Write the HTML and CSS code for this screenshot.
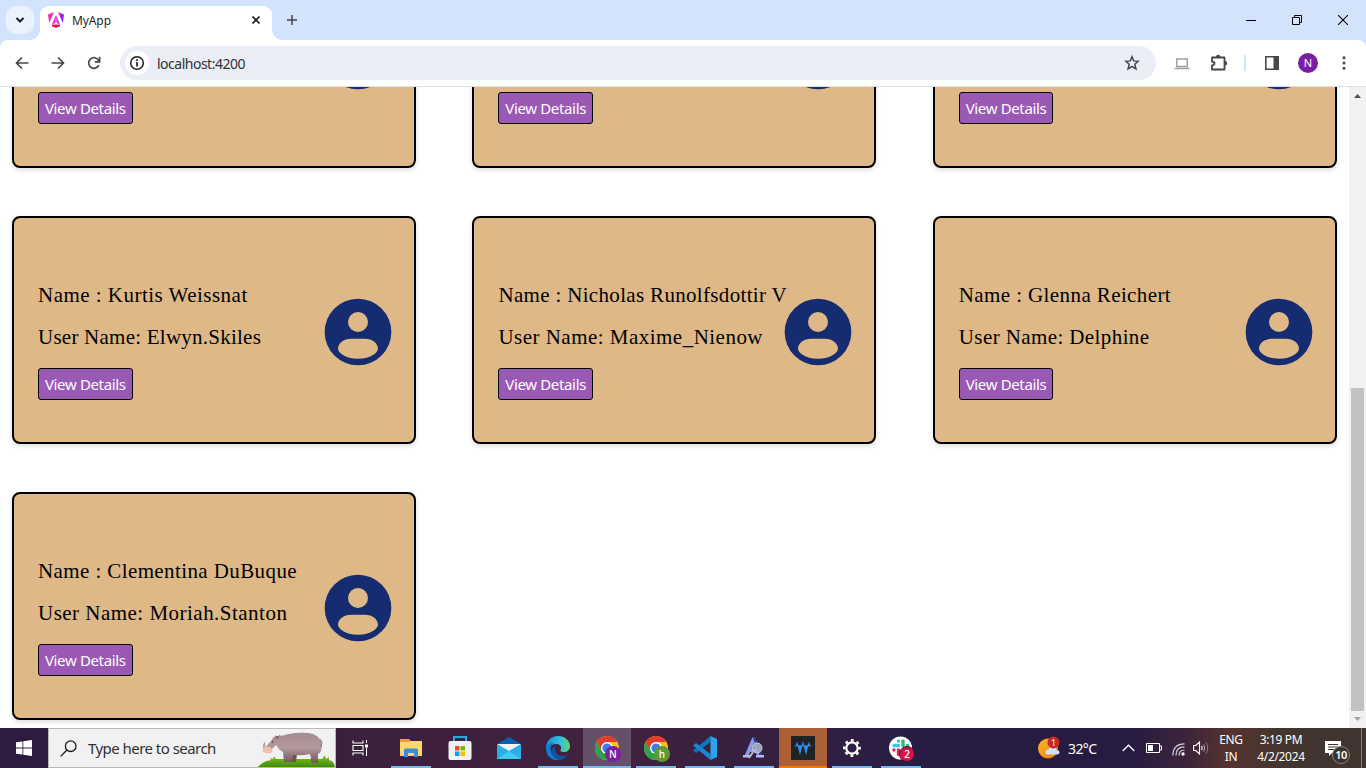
FILE: index.html
```html
<!DOCTYPE html>
<html lang="en">
<head>
<meta charset="utf-8">
<title>MyApp</title>
<link rel="stylesheet" href="styles.css">
</head>
<body>
<svg class="defs" width="0" height="0">
  <symbol id="avatar" viewBox="0 0 24 24"><path fill="#152c70" fill-rule="evenodd" d="M12 2a10 10 0 1 0 0 20a10 10 0 1 0 0-20zM12 6a3 3 0 1 1 0 6a3 3 0 1 1 0-6zM6 17c0-1.600 1.600-3 4-3h4c2.400 0 4 1.400 4 3c0 1-2 3-6 3s-6-2-6-3z"/></symbol>
  <symbol id="chrome" viewBox="0 0 24 24"><circle cx="12" cy="12" r="12" fill="#fbc116"/><path fill="#e33b2e" d="M1.600 6A12 12 0 0 1 22.400 6H12L6.800 15z"/><path fill="#2da24c" d="M1.600 6A12 12 0 0 0 12 24l5.200-9L6.800 15z"/><circle cx="12" cy="12" r="6" fill="#fff"/><circle cx="12" cy="12" r="4.600" fill="#3b7ded"/></symbol>
</svg>

<header class="tabstrip">
  <div class="tab-search"><svg width="10" height="8" viewBox="0 0 10 8"><path d="M1.500 2L5 5.500 8.500 2" fill="none" stroke="#1f1f1f" stroke-width="2"/></svg></div>
  <div class="tab">
    <svg class="favicon" width="16" height="16" viewBox="0 0 16 16"><defs><linearGradient id="ng" x1="0" x2="1" y1="0" y2="0"><stop offset="0" stop-color="#fb28b0"/><stop offset=".55" stop-color="#e72ad8"/><stop offset="1" stop-color="#7a1df5"/></linearGradient></defs><path fill="url(#ng)" d="M0 2.500L6 0 1.200 11zM16 2.500L10 0l4.800 11zM8 3.200l3.800 8.500H9.500L8.800 10H7.200l-.7 1.700H4.200zM8 6.200L7.200 8.600h1.600z"/><path fill="#f50a52" d="M4 12.500h8v1.700L8 16l-4-1.800z"/></svg>
    <span class="tab-title">MyApp</span>
    <svg width="8" height="8" viewBox="0 0 8 8"><path d="M.5.5l7 7M7.500.5l-7 7" stroke="#1f1f1f" stroke-width="1.600"/></svg>
  </div>
  <svg class="new-tab" width="10" height="10" viewBox="0 0 10 10"><path d="M5 0v10M0 5h10" stroke="#474747" stroke-width="1.500"/></svg>
  <div class="window-controls">
    <svg width="10" height="10" viewBox="0 0 10 10"><path d="M0 5.500h10" stroke="#000"/></svg>
    <svg width="10" height="10" viewBox="0 0 10 10"><path d="M.5 2.500h7v7h-7zM2.500 2.500v-2h7v7h-2" fill="none" stroke="#000"/></svg>
    <svg width="10" height="10" viewBox="0 0 10 10"><path d="M0 0l10 10M10 0L0 10" stroke="#000" stroke-width="1.100"/></svg>
  </div>
</header>

<nav class="toolbar">
  <svg width="14" height="14" viewBox="0 0 14 14" class="nav-icon"><path d="M13.500 7H2M7 1.500L1.500 7 7 12.500"/></svg>
  <svg width="14" height="14" viewBox="0 0 14 14" class="nav-icon"><path d="M.5 7H12M7 1.500L12.500 7 7 12.500"/></svg>
  <svg width="14" height="14" viewBox="0 0 14 14" class="nav-icon"><path d="M11.800 9.200A5.300 5.300 0 1 1 11.500 4.200L12.500 5.500M12.600.8v5H7.800"/></svg>
  <div class="address">
    <div class="site-info"><svg width="16" height="16" viewBox="0 0 16 16"><circle cx="8" cy="8" r="6.300" fill="none" stroke="#1f1f1f" stroke-width="1.500"/><path d="M8 7v4.500M8 4.300v1.600" stroke="#1f1f1f" stroke-width="1.700"/></svg></div>
    <span class="url">localhost:4200</span>
    <svg width="16" height="16" viewBox="0 0 16 16"><path d="M8 1.700l1.700 4.200 4.600.4-3.500 3 1.100 4.500L8 11.400l-3.900 2.400 1.100-4.500-3.500-3 4.600-.4z" fill="none" stroke="#474747" stroke-width="1.500"/></svg>
  </div>
  <div class="actions">
    <svg class="laptop" width="16" height="12" viewBox="0 0 16 12"><path d="M2.700.9h10.600v7.500H2.700zM.5 10.500h15" fill="none" stroke="#a0a0a0" stroke-width="1.500"/></svg>
    <svg width="18" height="18" viewBox="0 0 18 18"><path d="M2 3.500h12.500v12H2v-4q2.500-.5 2.500-2T2 7.500z" fill="none" stroke="#474747" stroke-width="1.800" stroke-linejoin="round"/><path d="M6 3a2.200 2.200 0 0 1 4.400 0zM15 7a2.200 2.200 0 0 1 0 4.400z" fill="#474747"/></svg>
    <i class="divider"></i>
    <svg class="side-panel" width="14" height="14" viewBox="0 0 14 14"><path d="M.8.8h12.400v12.400H.8z" fill="none" stroke="#474747" stroke-width="1.600"/><path d="M8.500 0H14v14H8.500z" fill="#474747"/></svg>
    <span class="profile">N</span>
    <svg class="menu" width="4" height="14" viewBox="0 0 4 14" fill="#474747"><circle cx="2" cy="1.700" r="1.500"/><circle cx="2" cy="7" r="1.500"/><circle cx="2" cy="12.300" r="1.500"/></svg>
  </div>
</nav>

<div class="viewport">
  <main class="cards">
    <article class="card"><div class="info brief"><button>View Details</button></div><svg class="avatar"><use href="#avatar"/></svg></article>
    <article class="card"><div class="info brief"><button>View Details</button></div><svg class="avatar"><use href="#avatar"/></svg></article>
    <article class="card"><div class="info brief"><button>View Details</button></div><svg class="avatar"><use href="#avatar"/></svg></article>
    <article class="card"><div class="info"><p class="wide">Name : Kurtis Weissnat</p><p class="snug">User Name: Elwyn.Skiles</p><button>View Details</button></div><svg class="avatar"><use href="#avatar"/></svg></article>
    <article class="card"><div class="info"><p>Name : Nicholas Runolfsdottir V</p><p class="wide">User Name: Maxime_Nienow</p><button>View Details</button></div><svg class="avatar"><use href="#avatar"/></svg></article>
    <article class="card"><div class="info"><p class="mid">Name : Glenna Reichert</p><p class="mid">User Name: Delphine</p><button>View Details</button></div><svg class="avatar"><use href="#avatar"/></svg></article>
    <article class="card"><div class="info"><p class="mid">Name : Clementina DuBuque</p><p class="wide">User Name: Moriah.Stanton</p><button>View Details</button></div><svg class="avatar"><use href="#avatar"/></svg></article>
  </main>
  <div class="scrollbar">
    <svg width="17" height="17" viewBox="0 0 17 17"><path d="M5 11h7L8.500 7z" fill="#505050"/></svg>
    <i class="thumb"></i>
    <svg width="17" height="17" viewBox="0 0 17 17"><path d="M5 6h7l-3.500 4z" fill="#a3a3a3"/></svg>
  </div>
</div>

<footer class="taskbar">
  <div class="start"><svg width="16" height="16" viewBox="0 0 16 16" fill="#fff"><path d="M0 2.300L6.500 1.400V7.600H0zM7.300 1.300L16 0v7.600H7.300zM0 8.400h6.500v6.200L0 13.700zM7.300 8.400H16V16l-8.700-1.300z"/></svg></div>
  <div class="search">
    <svg width="17" height="17" viewBox="0 0 17 17"><circle cx="10.700" cy="6.200" r="5.300" fill="none" stroke="#1a1a1a" stroke-width="1.300"/><path d="M7 10L.6 16.400" stroke="#1a1a1a" stroke-width="1.300"/></svg>
    <span class="hint">Type here to search</span>
    <svg class="hippo" width="77" height="35" viewBox="0 0 77 35">
      <defs><linearGradient id="skin" x1="0" x2="0" y1="0" y2="1"><stop offset="0" stop-color="#a58b92"/><stop offset=".5" stop-color="#b39a9c"/><stop offset="1" stop-color="#6d5759"/></linearGradient><linearGradient id="grass" x1="0" x2="0" y1="0" y2="1"><stop offset="0" stop-color="#8fc31d"/><stop offset="1" stop-color="#3d8b0c"/></linearGradient></defs>
      <path d="M0 35Q5 29 13 28l-1-2 3 1 1-3 2 3 22 0 24 0 3-4 1 4 3-2 0 3q5 1 6 7z" fill="url(#grass)"/>
      <path d="M33 21l6 1-1 8h-5zM53 20l6 1-1 9h-5z" fill="#6b5457"/>
      <path d="M7 15Q11 12 14 7.500q1-3.500 6-3.500 2-2 3 0 6-2 14-3 12-1 18 1 8 3 9 11 0 7-4 9l0 9h-6l-2-9q-8 2-17 1l-1 7h-8l-1-10q-5-3-7-7-3 4-8 6-4 1-5-4 0-4 2-5z" fill="url(#skin)"/>
      <path d="M6 15q5-2 8 2 2 4-3 4.500-6 0-6.500-3z" fill="#f2c3ab"/><circle cx="14.500" cy="10" r=".8" fill="#493739"/><path d="M17 3.500l4 1-2 3z" fill="#80656b"/><path d="M62 7q3.500 3 1 8" fill="none" stroke="#8e747a"/>
    </svg>
  </div>
  <div class="task-view"><svg width="17" height="16" viewBox="0 0 17 16"><path d="M1 .5v2.500h10V.5M1 5.500h10v5H1zM1 15.500V13h10v2.500M14.500 0v3M14.500 8v8" fill="none" stroke="#fff" stroke-width="1.100"/><path d="M13 4.500h3v3h-3z" fill="#fff"/></svg></div>
  <div class="apps">
    <div class="app open"><svg width="22" height="20" viewBox="0 0 22 20"><path d="M0 1h9l2 2h11v15H0z" fill="#e8a51c"/><path d="M0 4h9l2-1h11v15H0z" fill="#ffd86b"/><path d="M4 19v-7q0-1.500 1.500-1.500h11q1.500 0 1.500 1.500v7h-4v-4H8v4z" fill="#3b8fd6"/></svg></div>
    <div class="app"><svg width="24" height="24" viewBox="0 0 24 24"><path d="M6 6V1h12v5" fill="none" stroke="#26a8e0" stroke-width="2"/><rect x=".5" y="5" width="23" height="19" rx="2" fill="#f2f2f2"/><path d="M7 10h4.500v4.500H7z" fill="#f04e23"/><path d="M12.500 10H17v4.500h-4.500z" fill="#7cb905"/><path d="M7 15.500h4.500V20H7z" fill="#00a3ee"/><path d="M12.500 15.500H17V20h-4.500z" fill="#ffb800"/></svg></div>
    <div class="app"><svg width="24" height="22" viewBox="0 0 24 22"><path d="M0 7L12 0l12 7v3H0z" fill="#0b5fae"/><path d="M1 7h22v5L12 17 1 12z" fill="#f3f3f3"/><path d="M0 7l12 7 12-7v15H0z" fill="#28afe8"/><path d="M0 22l12-8 12 8z" fill="#42c9f5"/></svg></div>
    <div class="app open"><svg width="24" height="24" viewBox="0 0 24 24"><defs><linearGradient id="edge" x1="0" x2="1" y1=".3" y2=".3"><stop offset="0" stop-color="#168fd9"/><stop offset=".6" stop-color="#32bfe0"/><stop offset="1" stop-color="#61d861"/></linearGradient></defs><path d="M0 12C0 5 5 0 12 0s12 5 12 10c0 4-3 6-6 6-4 0-4-1-3-3 1-3-2-5-5-5-5 0-10 4-10 7z" fill="url(#edge)"/><path d="M0 12q2-6 8-5c-3 2-4 4-3 8 1 5 5 8 9 9C5 25 0 20 0 12z" fill="#137bd0"/><path d="M9 10c-1 5 2 10 8 10 2 0 4-1 5-2-2 4-6 6-9 6C5 22 3 14 9 10z" fill="#12529d"/></svg></div>
    <div class="app open active"><svg width="24" height="24"><use href="#chrome"/></svg><b class="badge violet">N</b></div>
    <div class="app open"><svg width="24" height="24"><use href="#chrome"/></svg><b class="badge green">h</b></div>
    <div class="app open"><svg width="24" height="24" viewBox="0 0 24 24"><path d="M17.500 0v6L3 17l-3-2.500z" fill="#0d75bc"/><path d="M0 9.500L3 7l14.500 11v6z" fill="#1888d0"/><path d="M17.500 0L24 3v18l-6.500 3z" fill="#2aa5ef"/></svg></div>
    <div class="app open"><svg width="22" height="22" viewBox="0 0 22 22"><path d="M1 20L9.500 0h2L20 20h-5l-2-5H7l-2 5zM8 12h5l-2.500-6z" fill="#8d9ae6"/><path d="M9.500 0h2L20 20h-3z" fill="#3439a4"/><path d="M0 18h7v2.500H0zM13 18h8v2.500h-8z" fill="#b4bcec"/><circle cx="14" cy="11" r="5" fill="#a8b6cc" fill-opacity=".85" stroke="#c8ced8"/><path d="M10 15l-4 6" stroke="#b9bdcc" stroke-width="2"/></svg></div>
    <div class="app alert"><svg width="24" height="24" viewBox="0 0 24 24"><path fill="#202325" d="M0 0h24v24H0z"/><path d="M3.500 10h17" stroke="#3289e8" stroke-width=".8"/><path d="M4.500 10L6 5.500 7.500 10zM10.500 10L12 5l1.500 5zM16.500 10L18 5.500l1.500 4.500z" fill="#3289e8"/><path d="M6.500 9.500h5L9 19zM12.500 9.500h5L15 19z" fill="#2f8df2"/></svg></div>
    <div class="app open"><svg width="18" height="18" viewBox="0 0 18 18" fill="none" stroke="#fff"><circle cx="9" cy="9" r="5.700" stroke-width="2.200"/><circle cx="9" cy="9" r="7.600" stroke-width="2.600" stroke-dasharray="2.900 3.070" stroke-dashoffset="1.450"/></svg></div>
    <div class="app open"><svg width="24" height="24" viewBox="0 0 24 24"><circle cx="11.500" cy="12" r="11.500" fill="#fff"/><g fill="none" stroke-width="3.400" stroke-linecap="round"><path d="M9.500 5v0M5 9.500h4.500" stroke="#36c5f0"/><path d="M14 5v4.500M18.500 9.500v0" stroke="#2eb67d"/><path d="M14 14h4.500M14 18.500v0" stroke="#ecb22e"/><path d="M9.500 14v4.500M5 14v0" stroke="#e01e5a"/></g></svg><b class="badge crimson">2</b></div>
  </div>
  <div class="tray">
    <svg class="weather" width="24" height="24" viewBox="0 0 24 24"><defs><linearGradient id="sun" x1="0" x2="1" y1="0" y2="1"><stop offset="0" stop-color="#fbb927"/><stop offset="1" stop-color="#ef7a12"/></linearGradient></defs><circle cx="11" cy="12.500" r="10" fill="url(#sun)"/><path d="M11 18.500q-3-.5-2.500-3 .5-2 3-2 1-3 4-3 3.500 0 4 3.500 3 0 3 2.500 0 2-2.500 2z" fill="#cfe1f6"/><circle cx="16.500" cy="6.500" r="6" fill="#c62a23"/><text x="16.500" y="9.700" fill="#fff" font-family="Noto Sans, sans-serif" font-size="9" text-anchor="middle">1</text></svg>
    <span class="temp">32°C</span>
    <svg class="chevron" width="13" height="8" viewBox="0 0 13 8"><path d="M.7 7L6.500 1.200 12.300 7" fill="none" stroke="#fff" stroke-width="1.300"/></svg>
    <svg class="battery" width="16" height="10" viewBox="0 0 16 10"><path d="M.5.5h13v9H.5zM14 3h1.500v4H14" fill="none" stroke="#fff"/><path d="M2 2h5v6H2z" fill="#fff"/></svg>
    <svg class="wifi" width="13" height="13" viewBox="0 0 13 13"><g fill="none" stroke="#d5d0dc" stroke-width="1.200"><path d="M.8 12.500Q1 1 12.500.8M3.900 12.500Q4 4 12.500 3.900M7 12.500Q7 7 12.500 7"/></g><circle cx="11" cy="11" r="1.700" fill="#fff"/></svg>
    <svg class="sound" width="17" height="14" viewBox="0 0 17 14"><path d="M.6 4.500h2.200L6.500 1v12L2.800 9.500H.6zM8.500 5q1.200 2 0 4" fill="none" stroke="#fff" stroke-width="1.100"/><path d="M10.700 3.500q2 3.500 0 7" fill="none" stroke="#bbb5bd"/><path d="M13 1.500q3.500 5.500 0 11" fill="none" stroke="#88808b"/></svg>
    <div class="lang"><span>ENG</span><span>IN</span></div>
    <div class="clock"><span>3:19 PM</span><span>4/2/2024</span></div>
    <div class="notify"><svg width="16" height="15" viewBox="0 0 16 15"><path d="M0 0h16v12H7l-3 3v-3H0z" fill="#fff"/><path d="M3 3.500h10M3 6h10M3 8.500h6" stroke="#44352f"/></svg><b>10</b></div>
    <i class="peek"></i>
  </div>
</footer>
</body>
</html>
```
FILE: styles.css
```css
* { box-sizing: border-box; }
body { margin: 0; width: 1366px; height: 768px; overflow: hidden; display: flex; flex-direction: column; background: #fff; font-family: "Noto Sans", sans-serif; }
svg { display: block; flex: none; }
.defs { position: absolute; }

.tabstrip { height: 40px; flex: none; background: #d3e3fd; display: flex; align-items: center; padding-left: 6px; }
.tab-search { width: 28px; height: 28px; border-radius: 10px; background: #ebf1fd; display: flex; align-items: center; justify-content: center; margin-right: 6px; }
.tab { position: relative; width: 232px; height: 34px; margin-top: 6px; padding: 0 12px 6px 8px; border-radius: 9px 9px 0 0; background: #fff; display: flex; align-items: center; }
.tab::before, .tab::after { content: ""; position: absolute; bottom: 0; width: 10px; height: 10px; }
.tab::before { left: -10px; background: radial-gradient(circle at 0 0, transparent 9.500px, #fff 10px); }
.tab::after { right: -10px; background: radial-gradient(circle at 100% 0, transparent 9.500px, #fff 10px); }
.tab-title { font-size: 12px; color: #1f1f1f; margin-left: 8px; flex: 1; letter-spacing: -.1px; }
.new-tab { margin-left: 15px; }
.window-controls { margin-left: auto; margin-right: 18px; display: flex; gap: 36px; }

.toolbar { position: relative; height: 47px; flex: none; border-bottom: 1px solid #dfe1e5; border-radius: 8px 8px 0 0; background: #fff; display: flex; align-items: center; padding: 0 20px 0 15px; }
.toolbar::before { content: ""; position: absolute; z-index: -1; left: 0; right: 0; top: 0; height: 9px; background: #d3e3fd; }
.nav-icon { margin-right: 22px; fill: none; stroke: #474747; stroke-width: 1.700; }
.nav-icon:nth-of-type(3) { margin-right: 19px; }
.address { width: 1036px; height: 34px; border-radius: 17px; background: #ebeef7; display: flex; align-items: center; padding: 0 16px 0 5px; }
.site-info { width: 24px; height: 24px; border-radius: 50%; background: #fff; display: flex; align-items: center; justify-content: center; }
.url { margin-left: 8px; flex: 1; font-size: 14px; color: #303236; letter-spacing: -.5px; }
.actions { flex: 1; display: flex; align-items: center; padding-left: 18px; }
.laptop { margin-top: 2px; margin-right: 20px; }
.divider { width: 2px; height: 16px; margin-left: 16px; background: #d3e3fd; }
.side-panel { margin-left: 19px; }
.profile { width: 20px; height: 20px; margin-left: 19px; border-radius: 50%; background: #7b1fa2; color: #fff; font-size: 11px; line-height: 20px; text-align: center; }
.menu { margin-left: auto; }

.viewport { flex: 1; min-height: 0; overflow: hidden; display: flex; }
.cards { width: 1349px; height: 780px; margin-top: -147px; padding: 0 12px; display: grid; grid-template-columns: repeat(3, 404px); grid-auto-rows: 228px; gap: 48px 56.400px; }
.card { border: 2px solid #000; border-radius: 8px; background: #deb887; box-shadow: 0 2px 5px rgba(0,0,0,.14); padding: 63px 16px 0 24px; display: flex; justify-content: space-between; }
.info { width: 0; white-space: nowrap; }
.brief { padding-top: 87px; }
.info p { margin: 0 0 14px; font: 21px/28px "Liberation Serif", serif; height: 28px; color: #000; letter-spacing: .33px; }
.info p + p { margin-bottom: 17px; }
.info .wide { letter-spacing: .48px; }
.info .mid { letter-spacing: .4px; }
.info .snug { letter-spacing: .24px; }
.info button { display: block; width: 94.500px; height: 32px; padding: 0; border: 1px solid #000; border-radius: 3px; background: #9b59b6; color: #fff; font: 15px "Noto Sans", sans-serif; letter-spacing: -.35px; }
.avatar { width: 80px; height: 80px; margin-top: 11px; }
.scrollbar { width: 17px; background: #f1f1f1; display: flex; flex-direction: column; }
.thumb { width: 13px; height: 323px; margin: auto 2px 0; background: #c1c1c1; }

.taskbar { height: 40px; flex: none; display: flex; color: #fff; background: linear-gradient(90deg, #2d1c40 0, #3b203c 25%, #40223f 45%, #35203f 56%, #291d43 66%, #281b43 83%, #3e2539 87%, #55332f 90%, #44352f 94%, #40342e 100%); }
.start, .task-view { width: 48px; display: flex; align-items: center; justify-content: center; }
.search { width: 288px; background: #f1f1f1; border: 1px solid #b9b6bc; display: flex; align-items: center; padding-left: 11px; }
.hint { margin-left: 11px; flex: 1; font-size: 15px; color: #303030; letter-spacing: -.54px; white-space: nowrap; }
.hippo { align-self: flex-end; }
.apps { margin-left: 3px; display: flex; gap: 1px; }
.app { position: relative; width: 48px; display: flex; align-items: center; justify-content: center; }
.app.open::after { content: ""; position: absolute; left: 4px; right: 4px; bottom: 0; height: 2px; background: #76b9ed; }
.app.active { background: #65506a; }
.app.active::after { left: 0; right: 0; }
.app.alert { background: #ad6035; border-bottom: 2px solid #f70; padding-top: 2px; }
.badge { position: absolute; left: 22px; top: 18px; width: 16px; height: 16px; border-radius: 50%; font-size: 10px; line-height: 16px; text-align: center; font-weight: 500; }
.violet { background: #7b1fa2; }
.green { background: #5f9636; }
.crimson { background: #d5144c; border: 1px solid #3b1230; line-height: 14px; }
.tray { margin-left: auto; width: 329px; display: flex; align-items: center; font-size: 12px; }
.temp { width: 30px; margin-left: 7px; font-size: 14px; letter-spacing: -.6px; white-space: nowrap; }
.chevron { margin-left: 24px; }
.battery { margin-left: 11px; }
.wifi { margin-left: 10px; margin-top: 2px; }
.sound { margin-left: 8px; }
.lang, .clock { display: flex; flex-direction: column; text-align: center; line-height: 17px; white-space: nowrap; letter-spacing: -.35px; }
.lang { width: 24px; margin-left: 9px; }
.clock { width: 48px; margin-left: 14px; }
.notify { position: relative; margin-left: 20px; width: 26px; }
.notify b { position: absolute; left: 7px; top: 5px; width: 18px; height: 18px; border: 1px solid #8b8581; border-radius: 50%; background: #393330; font: 600 11px/16px "Noto Sans", sans-serif; text-align: center; letter-spacing: -.5px; }
.peek { width: 1px; height: 40px; margin-left: auto; margin-right: 4px; background: #8b8480; }
```
